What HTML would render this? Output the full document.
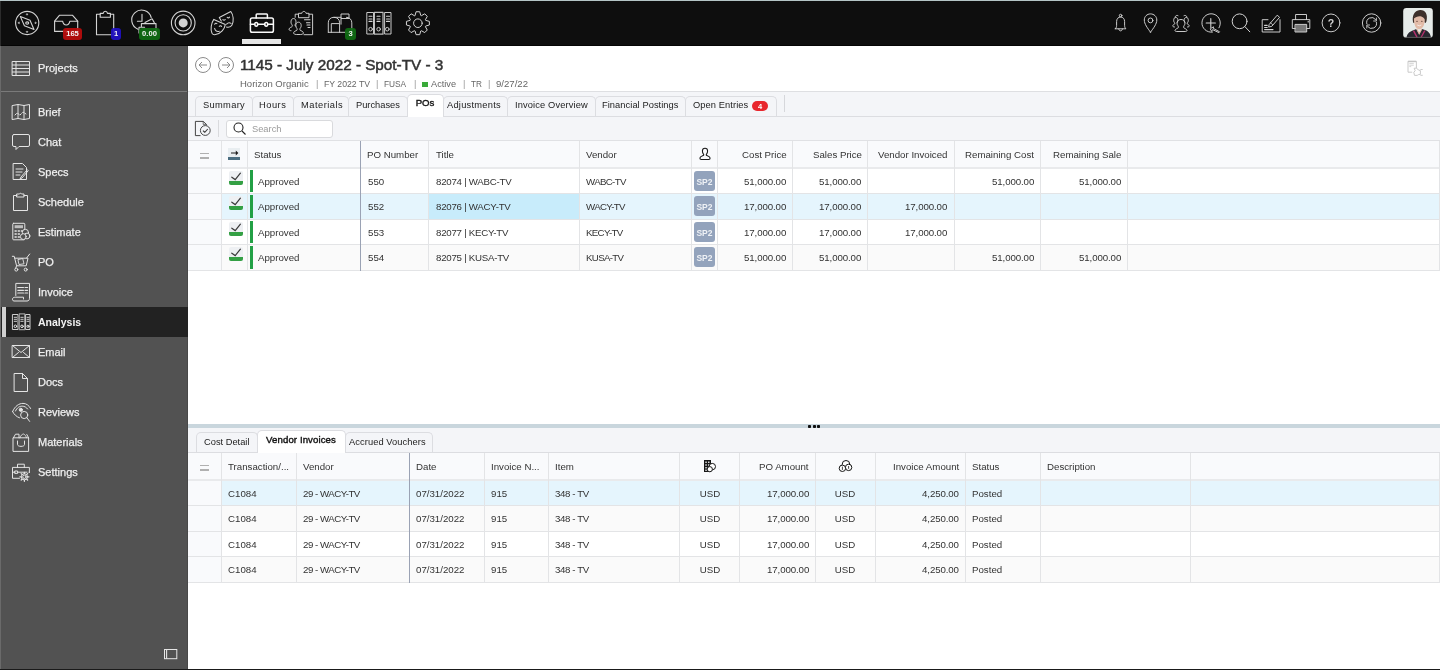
<!DOCTYPE html><html><head><meta charset='utf-8'><style>
*{box-sizing:border-box;margin:0;padding:0}
html,body{width:1440px;height:670px;overflow:hidden;background:#fff;font-family:"Liberation Sans", sans-serif;color:#333}
.a{position:absolute}
.t{position:absolute;white-space:nowrap;line-height:1;will-change:transform}
svg{position:absolute;overflow:visible}
</style></head><body><div id='root' style='position:absolute;left:0;top:0;width:1440px;height:670px;overflow:hidden;opacity:0.999'><div class='a' style='left:0;top:0;width:1440px;height:46px;background:#0e0e0e'></div><div class='a' style='left:0;top:0;width:1440px;height:1px;background:#b4c4c6'></div><div class='a' style='left:0;top:45px;width:1440px;height:1px;background:#050505'></div><div class='a' style='left:0;top:1px;width:1px;height:45px;background:#2c2c2c'></div><svg style='left:10px;top:6px' width='35' height='34' viewBox='10 6 35 34' fill='none' stroke='#d4d4d4' stroke-width='1.1' stroke-linecap='round' stroke-linejoin='round' ><circle cx='27.2' cy='23' r='11.6'/><path d='M20.4 16.6 L30 20.3 L34 29.5 L24.4 25.8 Z'/><ellipse cx='27.2' cy='23' rx='1.5' ry='1.1'/><path d='M26.5 14.8h1.4l-.7-1.1zM26.5 31.4h1.4l-.7 1.1zM19.3 22.3v1.4l-1.1-.7zM35.1 22.3v1.4l1.1-.7z' fill='#d4d4d4' stroke-width='0.6'/></svg><svg style='left:50px;top:10px' width='32' height='26' viewBox='50 10 32 26' fill='none' stroke='#d4d4d4' stroke-width='1.1' stroke-linecap='round' stroke-linejoin='round' ><path d='M54.6 31.4V21.2L59.4 15.3H72.6L77.7 21.2V31.4Z'/><path d='M54.6 21.2H62.6C63.6 26.3 68.9 26.3 69.9 21.2H77.7'/></svg><div class='a' style='left:63px;top:28px;width:19px;height:12px;background:#b90c0c;border-radius:3px;opacity:.93'></div><div class='t' style='left:63.0px;width:19px;text-align:center;top:30.37px;font-size:7.6px;font-weight:700;color:#f2f2f2;'>165</div><svg style='left:92px;top:8px' width='28' height='30' viewBox='92 8 28 30' fill='none' stroke='#d4d4d4' stroke-width='1.1' stroke-linecap='round' stroke-linejoin='round' ><path d='M100 14.2H96.5V34.7H113.7V14.2H110.4'/><path d='M100.2 17.2V13.4H103.2C103.6 10.6 107.1 10.6 107.5 13.4H110.4V17.2Z'/></svg><div class='a' style='left:111px;top:28px;width:10px;height:12px;background:#2010c4;border-radius:3px;opacity:.93'></div><div class='t' style='left:111.0px;width:10px;text-align:center;top:30.37px;font-size:7.6px;font-weight:700;color:#f2f2f2;'>1</div><svg style='left:128px;top:8px' width='32' height='30' viewBox='128 8 32 30' fill='none' stroke='#d4d4d4' stroke-width='1.1' stroke-linecap='round' stroke-linejoin='round' ><path d='M151.2 17.5A9.9 9.9 0 1 0 138 29.2'/><path d='M142 14.3V21.3H137.4'/><path d='M145 22.6L152.1 18.8L154.3 22.6'/><path d='M141.4 26.5V23.6H156V33H141.4'/><path d='M139 33V27.2H144.6'/></svg><div class='a' style='left:139px;top:28px;width:21px;height:12px;background:#0f6c12;border-radius:3px;opacity:.93'></div><div class='t' style='left:139.0px;width:21px;text-align:center;top:30.37px;font-size:7.6px;font-weight:700;color:#f2f2f2;'>0.00</div><svg style='left:168px;top:8px' width='30' height='30' viewBox='168 8 30 30' fill='none' stroke='#d4d4d4' stroke-width='1.1' stroke-linecap='round' stroke-linejoin='round' ><circle cx='183.2' cy='22.9' r='11.8'/><circle cx='183.2' cy='22.9' r='8.1'/><circle cx='183.2' cy='22.9' r='4.5' fill='#d4d4d4' stroke='none'/></svg><svg style='left:206px;top:8px' width='32' height='30' viewBox='206 8 32 30' fill='none' stroke='#d4d4d4' stroke-width='1.05' stroke-linecap='round' stroke-linejoin='round' ><path d='M213.8 19.4L225.3 24.6C224.6 29 221 33.6 215.5 34.6C213.6 35 212.6 34.3 212 33.2C210.1 29.5 211.3 23 213.8 19.4Z'/><path d='M221.3 21.1L219.3 17.5L230.8 11.5C233.5 15 234 21 232 25C231 27 229.5 27.6 226.5 27'/><path d='M214.7 24.2Q215.7 22.7 216.9 23.7M219.3 26.3Q220.5 25 221.6 26.4M214.6 28.4Q215.6 32.2 219.3 31.2'/><path d='M222.9 19.6Q224.1 20.8 225.2 19.5M227.2 17.4Q228.4 18.5 229.5 17.1M226.6 24.2Q228.6 21.7 231 23.4'/></svg><svg style='left:246px;top:10px' width='32' height='26' viewBox='246 10 32 26' fill='none' stroke='#fafafa' stroke-width='1.5' stroke-linecap='round' stroke-linejoin='round' ><rect x='250.4' y='18' width='23' height='14.3' rx='1.8'/><path d='M256.2 18V14.8Q256.2 14 257 14H266.6Q267.4 14 267.4 14.8V18'/><path d='M250.4 24.3H254.8M257.6 24.3H264.8M267.6 24.3H273.4'/><ellipse cx='256.2' cy='24.3' rx='1.5' ry='1.9'/><ellipse cx='266.2' cy='24.3' rx='1.5' ry='1.9'/></svg><div class='a' style='left:242px;top:39px;width:39px;height:5px;background:#e6e6e6'></div><svg style='left:285px;top:8px' width='31' height='30' viewBox='285 8 31 30' fill='none' stroke='#d4d4d4' stroke-width='0.95' stroke-linecap='round' stroke-linejoin='round' ><path d='M298.2 14.2H295.2V17.3M304 34.7H312.6V14.2H309'/><path d='M298.5 17.3V13.3H301.8C302.2 10.8 305.6 10.8 306 13.3H309V17.3Z'/><path d='M304.5 19.8H310M306.5 22.7H310M307 25H310M308 27.5H310' stroke-width='1.1'/><path d='M291 30.7C288 30.7 288.5 28 291.5 27C292.8 26.5 292.3 25 291.7 24.3C290.5 23 290.7 18.5 293.5 18.5C296.3 18.5 296.5 23 295.3 24.3C294.7 25 295 26 296 26.5'/><path d='M296 34.5C292.5 34.5 293 31.5 296.2 30.7C297.6 30.3 297.2 28.5 296.5 27.8C295.3 26.5 295.5 22.2 298.5 22.2C301.5 22.2 301.7 26.5 300.5 27.8C299.8 28.5 299.5 30.3 300.8 30.7C304 31.5 304.5 34.5 301 34.5Z'/></svg><svg style='left:324px;top:8px' width='32' height='30' viewBox='324 8 32 30' fill='none' stroke='#d4d4d4' stroke-width='0.95' stroke-linecap='round' stroke-linejoin='round' ><path d='M328.3 32.3V22.8C328.3 19.5 330.5 17.3 334 17.3H341M346.5 17.3C349.5 17.3 351.8 19.5 351.8 22.8V32.3H328.3'/><path d='M334 17.3C337.5 17.3 339.6 19.5 339.6 22.8V32.3'/><path d='M331.3 32.3V23.6H338.8'/><path d='M341 24.2V14H349V18.5H341.3'/></svg><div class='a' style='left:345px;top:28px;width:11px;height:12px;background:#0f6c12;border-radius:3px;opacity:.93'></div><div class='t' style='left:345.0px;width:11px;text-align:center;top:30.37px;font-size:7.6px;font-weight:700;color:#f2f2f2;'>3</div><svg style='left:364px;top:9px' width='30' height='28' viewBox='364 9 30 28' fill='none' stroke='#d4d4d4' stroke-width='0.95' stroke-linecap='round' stroke-linejoin='round' ><path d='M367.2 12.5H373.5V34H367.2Z'/><path d='M374.4 12.4H383V34.2H374.4Z' stroke='#bdbdbd' stroke-width='1.2'/><path d='M385 12.5H391V34H385Z'/><path d='M369 16.3H372M377 16.3H380M386.5 16.3H389.5M369 19H372M377 19H380M386.5 19H389.5M369 21.4H372M377 21.4H380M386.5 21.4H389.5' stroke-width='1.1'/><circle cx='370.6' cy='29.2' r='1.8'/><circle cx='378.6' cy='29.2' r='1.8'/><circle cx='387.3' cy='29.2' r='1.8'/></svg><svg style='left:403px;top:8px' width='30' height='30' viewBox='403 8 30 30' fill='none' stroke='#d4d4d4' stroke-width='1.0' stroke-linecap='round' stroke-linejoin='round' ><path d='M415.06 15.40 L416.09 11.74 L419.71 11.74 L420.74 15.40 L421.41 15.68 L424.72 13.82 L427.28 16.38 L425.42 19.69 L425.70 20.36 L429.36 21.39 L429.36 25.01 L425.70 26.04 L425.42 26.71 L427.28 30.02 L424.72 32.58 L421.41 30.72 L420.74 31.00 L419.71 34.66 L416.09 34.66 L415.06 31.00 L414.39 30.72 L411.08 32.58 L408.52 30.02 L410.38 26.71 L410.10 26.04 L406.44 25.01 L406.44 21.39 L410.10 20.36 L410.38 19.69 L408.52 16.38 L411.08 13.82 L414.39 15.68Z'/><circle cx='417.9' cy='23.2' r='4.3'/></svg><svg style='left:1110px;top:10px' width='22' height='26' viewBox='1110 10 22 26' fill='none' stroke='#d4d4d4' stroke-width='0.95' stroke-linecap='round' stroke-linejoin='round' ><circle cx='1120.6' cy='15.6' r='1.3'/><path d='M1115.3 28.8C1116.3 27.8 1116.6 26.8 1116.6 25.5V21.5C1116.6 18.8 1118.3 17 1120.6 17C1122.9 17 1124.6 18.8 1124.6 21.5V25.5C1124.6 26.8 1124.9 27.8 1125.9 28.8H1115.3Z'/><path d='M1118.8 29C1118.8 31.6 1122.4 31.6 1122.4 29'/></svg><svg style='left:1140px;top:10px' width='22' height='26' viewBox='1140 10 22 26' fill='none' stroke='#d4d4d4' stroke-width='0.95' stroke-linecap='round' stroke-linejoin='round' ><path d='M1150.5 32.2C1147.5 28 1144.3 24 1144.3 20C1144.3 16.5 1147 13.9 1150.5 13.9C1154 13.9 1156.8 16.5 1156.8 20C1156.8 24 1153.5 28 1150.5 32.2Z'/><circle cx='1150.5' cy='20.4' r='2.4'/></svg><svg style='left:1168px;top:10px' width='26' height='26' viewBox='1168 10 26 26' fill='none' stroke='#d4d4d4' stroke-width='0.95' stroke-linecap='round' stroke-linejoin='round' ><path d='M1174.5 27C1172.5 27 1171.8 25.5 1174 24.5C1175.2 24 1174.8 23 1174.3 22.4C1173.3 21.2 1173.3 17.5 1175.8 17.5C1178.3 17.5 1178.3 21.2 1177.3 22.4'/><path d='M1187.5 27C1189.5 27 1190.2 25.5 1188 24.5C1186.8 24 1187.2 23 1187.7 22.4C1188.7 21.2 1188.7 17.5 1186.2 17.5C1183.7 17.5 1183.7 21.2 1184.7 22.4'/><path d='M1176.5 31.5C1174 31.5 1174.5 29.5 1177.5 28.3C1178.8 27.8 1178.5 26.3 1177.8 25.5C1176.5 24 1176.5 19.5 1181 19.5C1185.5 19.5 1185.5 24 1184.2 25.5C1183.5 26.3 1183.2 27.8 1184.5 28.3C1187.5 29.5 1188 31.5 1185.5 31.5Z'/><path d='M1175 17C1175.5 15.5 1177 15 1178 15.6M1187 17C1186.5 15.5 1185 15 1184 15.6'/></svg><svg style='left:1198px;top:10px' width='26' height='26' viewBox='1198 10 26 26' fill='none' stroke='#d4d4d4' stroke-width='0.95' stroke-linecap='round' stroke-linejoin='round' ><path d='M1219 27.8A9.2 9.2 0 1 0 1212.5 32.1'/><path d='M1206.2 23H1215.4M1210.8 18.6V27.4' stroke-width='1.1'/><path d='M1210.6 28.6L1213.5 26.8L1213.3 28.4L1219.6 31.8L1218.8 32.6L1212.6 29.6L1211.8 31Z'/></svg><svg style='left:1228px;top:10px' width='26' height='26' viewBox='1228 10 26 26' fill='none' stroke='#d4d4d4' stroke-width='1.0' stroke-linecap='round' stroke-linejoin='round' ><circle cx='1239.6' cy='21.3' r='7.4'/><path d='M1244.9 26.6L1249.8 31.8'/></svg><svg style='left:1258px;top:10px' width='26' height='26' viewBox='1258 10 26 26' fill='none' stroke='#d4d4d4' stroke-width='0.95' stroke-linecap='round' stroke-linejoin='round' ><path d='M1268 19.7H1262.2V32H1280V19.7'/><path d='M1269.4 24.2L1277.2 15.2L1279.6 17.3L1271.8 26.3L1269 27Z'/><path d='M1270.2 22.6L1272.6 24.6' stroke-width='0.8'/><path d='M1264.6 25.4H1267.2M1264.6 27.5H1267.2M1264.6 29.6H1273' stroke-width='1.1'/></svg><svg style='left:1288px;top:10px' width='26' height='26' viewBox='1288 10 26 26' fill='none' stroke='#d4d4d4' stroke-width='0.95' stroke-linecap='round' stroke-linejoin='round' ><path d='M1295.6 19.6V14.5H1306.5V19.6'/><path d='M1295.6 28.5H1292.3V19.6H1309.8V28.5H1306.5'/><rect x='1295.4' y='24.4' width='11.3' height='7.6' fill='#777'/><path d='M1308.2 21.3V22' stroke-width='1.1'/></svg><svg style='left:1318px;top:10px' width='26' height='26' viewBox='1318 10 26 26' fill='none' stroke='#d4d4d4' stroke-width='0.95' stroke-linecap='round' stroke-linejoin='round' ><circle cx='1331' cy='22.9' r='8.9'/></svg><div class='t' style='left:1325.0px;width:12px;text-align:center;top:17.91px;font-size:10.5px;font-weight:700;color:#d4d4d4;'>?</div><svg style='left:1358px;top:10px' width='28' height='26' viewBox='1358 10 28 26' fill='none' stroke='#d4d4d4' stroke-width='0.95' stroke-linecap='round' stroke-linejoin='round' ><circle cx='1371.6' cy='23' r='9.2'/><path d='M1366.8 23.8A5 5 0 0 1 1375.6 19.5M1376.4 22.2A5 5 0 0 1 1367.6 26.5'/><path d='M1376.4 18V21H1373.6' stroke-width='0.9'/><path d='M1366.8 28V25H1369.6' stroke-width='0.9'/></svg><svg style='left:1403px;top:8px' width='30' height='30' viewBox='1403 8 30 30'><defs><clipPath id='av'><rect x='1403.2' y='8' width='29.6' height='29.8' rx='3.2'/></clipPath></defs><g clip-path='url(#av)'><rect x='1403' y='8' width='30' height='30' fill='#e6ebe9'/><path d='M1413 22C1412 16 1414 10.5 1420 10C1425.5 9.8 1428 14.5 1426.5 21C1426 23.5 1424.5 23.5 1424.3 21.5L1424.5 17L1414.5 18.5L1414.6 22.5C1414 23.5 1413.2 23.2 1413 22Z' fill='#3d302b'/><path d='M1414 19C1414 16 1416 15 1419 15C1422.5 15 1424.5 16.5 1424.6 19.5C1424.8 24.5 1423 29 1419.3 29.2C1415.6 29.3 1414 24.5 1414 19Z' fill='#e2bba8'/><path d='M1413.6 18.8C1414.5 14.5 1418 13 1421 13.4C1424 13.8 1425.6 15.8 1425.2 19.8C1424 17.8 1422.5 16.8 1420.5 16.3C1418 16 1415.5 17 1413.6 18.8Z' fill='#3d302b'/><ellipse cx='1417' cy='21.2' rx='0.9' ry='0.5' fill='#6a4a40'/><ellipse cx='1421.8' cy='21.2' rx='0.9' ry='0.5' fill='#6a4a40'/><path d='M1417.2 25Q1419.3 26.6 1421.4 25' stroke='#f6ebe6' stroke-width='0.9' fill='none'/><path d='M1406.5 38C1407 33.5 1409.5 31.5 1413.5 30.2L1416.3 29L1419.2 34L1422 29L1425 30C1429 31.5 1430.5 34 1431 38Z' fill='#26262e'/><path d='M1416.2 29.2L1419.2 35L1422.2 29.2L1421.5 28.6L1419.2 32.5L1416.9 28.6Z' fill='#ddb19c'/><path d='M1412.8 31L1416.5 37.8H1418L1414.3 30.5Z' fill='#b62f6c'/><path d='M1424.2 30.2L1420.2 37.8H1421.6L1425.5 30.7Z' fill='#b62f6c'/><rect x='1403' y='36.9' width='30' height='1.1' fill='#5a5a5a'/></g></svg><div class='a' style='left:0;top:46px;width:188px;height:624px;background:#525252'></div><div class='a' style='left:0;top:46px;width:1px;height:624px;background:#6a6a6a'></div><div class='a' style='left:187px;top:46px;width:1px;height:624px;background:#484848'></div><svg style='left:12px;top:61px' width='18' height='15' viewBox='0 0 18 15' fill='none' stroke='#e4e4e4' stroke-width='1' stroke-linejoin='round' stroke-linecap='round'><rect x='0.5' y='0.5' width='17' height='14'/><path d='M0.5 4h17M0.5 7.5h17M0.5 11h17M4 0.5v14'/></svg><div class='t' style='left:37.8px;top:62.69px;font-size:11px;font-weight:400;color:#efefef;-webkit-text-stroke:0.25px #efefef'>Projects</div><div class='a' style='left:1px;top:91px;width:186px;height:1px;background:#7a7a7a'></div><div class='t' style='left:37.8px;top:106.69px;font-size:11px;font-weight:400;color:#efefef;-webkit-text-stroke:0.25px #efefef'>Brief</div><svg style='left:12px;top:104px' width='18' height='16' viewBox='0 0 18 16' fill='none' stroke='#e4e4e4' stroke-width='1' stroke-linejoin='round' stroke-linecap='round'><path d='M0.5 1.5l5.5-1 6 1 5.5-1v14l-5.5 1-6-1-5.5 1z'/><path d='M6 0.5v14M12 1.5v14'/><path d='M3 11l2-2 3 2 3-3 3 2' stroke-dasharray='1 1.2'/></svg><div class='t' style='left:37.8px;top:136.69px;font-size:11px;font-weight:400;color:#efefef;-webkit-text-stroke:0.25px #efefef'>Chat</div><svg style='left:12px;top:134px' width='18' height='16' viewBox='0 0 18 16' fill='none' stroke='#e4e4e4' stroke-width='1' stroke-linejoin='round' stroke-linecap='round'><path d='M2 0.5h14a1.5 1.5 0 0 1 1.5 1.5v9a1.5 1.5 0 0 1-1.5 1.5H7l-3 3v-3H2A1.5 1.5 0 0 1 0.5 11V2A1.5 1.5 0 0 1 2 0.5z'/></svg><div class='t' style='left:37.8px;top:166.69px;font-size:11px;font-weight:400;color:#efefef;-webkit-text-stroke:0.25px #efefef'>Specs</div><svg style='left:13px;top:163px' width='16' height='18' viewBox='0 0 16 18' fill='none' stroke='#e4e4e4' stroke-width='1' stroke-linejoin='round' stroke-linecap='round'><path d='M0.5 0.5h9l4 4v12h-13z'/><path d='M3 6h7M3 9h6M3 12h4'/><path d='M15 8l-6 7-2 1 1-2 6-7z'/></svg><div class='t' style='left:37.8px;top:196.69px;font-size:11px;font-weight:400;color:#efefef;-webkit-text-stroke:0.25px #efefef'>Schedule</div><svg style='left:13px;top:193px' width='15' height='18' viewBox='0 0 15 18' fill='none' stroke='#e4e4e4' stroke-width='1' stroke-linejoin='round' stroke-linecap='round'><path d='M4 2.5H0.5v15h14v-15H11'/><path d='M4 1h2.5c0-1 2-1 2 0H11v3H4z'/></svg><div class='t' style='left:37.8px;top:226.69px;font-size:11px;font-weight:400;color:#efefef;-webkit-text-stroke:0.25px #efefef'>Estimate</div><svg style='left:8px;top:219px' width='26' height='25' viewBox='8 219 26 25' fill='none' stroke='#e4e4e4' stroke-width='1' stroke-linejoin='round' stroke-linecap='round'><rect x='12.8' y='223.3' width='12' height='16.5' rx='0.8'/><rect x='14.6' y='225.2' width='8.4' height='3' fill='#bdbdbd' stroke='none'/><path d='M15 231h1.3M18.2 231h1.3M21.3 231h1.3M15 234h1.3M18.2 234h1.3M15 237h1.3M18.2 237h1.3' stroke-width='1.3'/><circle cx='25.4' cy='232.4' r='3.1' fill='#525252'/><circle cx='27' cy='236' r='2.9' fill='#525252'/><circle cx='23.3' cy='236.6' r='2.9' fill='#525252'/></svg><div class='t' style='left:37.8px;top:256.69px;font-size:11px;font-weight:400;color:#efefef;-webkit-text-stroke:0.25px #efefef'>PO</div><svg style='left:8px;top:249px' width='26' height='26' viewBox='8 249 26 26' fill='none' stroke='#e4e4e4' stroke-width='1' stroke-linejoin='round' stroke-linecap='round'><path d='M12.3 256.3H14.2L16.6 265.8H26.2L28 258.2H15'/><path d='M26.6 258L29.7 254'/><circle cx='16.3' cy='269.6' r='1.5'/><circle cx='25.7' cy='269.6' r='1.5'/><path d='M16.6 265.8L15.7 268.1'/><path d='M18.3 259.5L22.7 258.5L24 263.8L19.4 264.5Z' stroke-width='0.9'/></svg><div class='t' style='left:37.8px;top:286.69px;font-size:11px;font-weight:400;color:#efefef;-webkit-text-stroke:0.25px #efefef'>Invoice</div><svg style='left:8px;top:279px' width='26' height='26' viewBox='8 279 26 26' fill='none' stroke='#e4e4e4' stroke-width='1' stroke-linejoin='round' stroke-linecap='round'><path d='M15.8 295.5V283.4H29.5V298.3C29.5 300 28.5 301 27 301H14C12.5 301 12.3 299.3 12.6 298.5C13 297.5 14.3 297.2 15.8 297.2H23.5V299'/><path d='M17.8 287.5H23.5M17.8 290.3H23.5M17.8 293H23.5M25 287.5H27.6M25 290.3H27.6M25 293H27.6' stroke-width='1.2'/></svg><div class='a' style='left:1px;top:307px;width:187px;height:30px;background:#222'></div><div class='a' style='left:2px;top:307px;width:4px;height:30px;background:#cfcfcf'></div><div class='t' style='left:37.6px;top:316.81px;font-size:10.5px;font-weight:700;color:#f4f4f4;'>Analysis</div><svg style='left:8px;top:309px' width='26' height='26' viewBox='8 309 26 26' fill='none' stroke='#e4e4e4' stroke-width='1' stroke-linejoin='round' stroke-linecap='round'><rect x='12.8' y='314.5' width='5.2' height='15' stroke='#cfcfcf'/><rect x='19.3' y='313.8' width='5.4' height='15.9' stroke='#9a9a9a' stroke-width='1.2'/><rect x='26' y='314.5' width='4' height='15' stroke='#cfcfcf'/><path d='M14.2 317.3h2.4M20.8 317.3h2.4M27 317.3h2M14.2 319.3h2.4M20.8 319.3h2.4M27 319.3h2M14.2 321.3h2.4M20.8 321.3h2.4M27 321.3h2' stroke-width='0.9'/><circle cx='15.4' cy='326.3' r='1.3'/><circle cx='22' cy='326.3' r='1.3'/><circle cx='28' cy='326.3' r='1.1'/></svg><div class='t' style='left:37.8px;top:346.69px;font-size:11px;font-weight:400;color:#efefef;-webkit-text-stroke:0.25px #efefef'>Email</div><svg style='left:12px;top:345px' width='18' height='13' viewBox='0 0 18 13' fill='none' stroke='#e4e4e4' stroke-width='1' stroke-linejoin='round' stroke-linecap='round'><rect x='0.5' y='0.5' width='17' height='12'/><path d='M0.5 0.5l8.5 7 8.5-7M0.5 12.5l6-5M17.5 12.5l-6-5'/></svg><div class='t' style='left:37.8px;top:376.69px;font-size:11px;font-weight:400;color:#efefef;-webkit-text-stroke:0.25px #efefef'>Docs</div><svg style='left:14px;top:373px' width='14' height='19' viewBox='0 0 14 19' fill='none' stroke='#e4e4e4' stroke-width='1' stroke-linejoin='round' stroke-linecap='round'><path d='M0.5 0.5h8l5 5v13h-13z'/><path d='M8.5 0.5v5h5'/></svg><div class='t' style='left:37.8px;top:406.69px;font-size:11px;font-weight:400;color:#efefef;-webkit-text-stroke:0.25px #efefef'>Reviews</div><svg style='left:8px;top:399px' width='26' height='26' viewBox='8 399 26 26' fill='none' stroke='#e4e4e4' stroke-width='1' stroke-linejoin='round' stroke-linecap='round'><path d='M12.6 411.5C15 406 19 403.4 23 403.4C26.5 403.4 29 405.5 30.6 408.5'/><path d='M12.6 411.5C14 414.5 16.5 416.8 19.5 417.8'/><path d='M15.5 411C17 407.5 19.5 406.2 22.2 406.2C24.5 406.2 26.3 407.2 27.6 409'/><circle cx='20.8' cy='409.8' r='1.6' fill='#e4e4e4'/><circle cx='24.2' cy='415' r='3.6'/><path d='M26.8 417.6L29.6 421.4'/></svg><div class='t' style='left:37.8px;top:436.69px;font-size:11px;font-weight:400;color:#efefef;-webkit-text-stroke:0.25px #efefef'>Materials</div><svg style='left:8px;top:429px' width='26' height='26' viewBox='8 429 26 26' fill='none' stroke='#e4e4e4' stroke-width='1' stroke-linejoin='round' stroke-linecap='round'><path d='M13.4 437.8H28.6V451.4H13.4Z'/><path d='M13.4 437.8L15.5 434.2H19V437.8'/><path d='M28.6 437.8L26.8 434.5'/><path d='M20 437.8C20.5 435.5 22 434.3 23.5 434C25 434.5 26 436 26.5 437.8' stroke-width='0.9'/><path d='M17.5 441V444.5C17.5 447 24.5 447 24.5 444.5V441'/></svg><div class='t' style='left:37.8px;top:466.69px;font-size:11px;font-weight:400;color:#efefef;-webkit-text-stroke:0.25px #efefef'>Settings</div><svg style='left:8px;top:459px' width='26' height='26' viewBox='8 459 26 26' fill='none' stroke='#e4e4e4' stroke-width='1' stroke-linejoin='round' stroke-linecap='round'><path d='M17.5 467.4V464.2H24.3V467.4'/><path d='M19.5 478.3H12.5V467.4H29.4V472.5'/><path d='M12.5 472.2H15M17.8 472.2H27M29 472.2H29.4'/><rect x='15.1' y='471' width='2.5' height='2.4'/><circle cx='24.4' cy='476.8' r='1.7'/><path d='M24.4 472.3V473.4M24.4 480.2V481.3M19.9 476.8H21M27.8 476.8H28.9M21.2 473.6L22 474.4M26.8 479.2L27.6 480M21.2 480L22 479.2M26.8 474.4L27.6 473.6' stroke-width='1.3'/><circle cx='24.4' cy='476.8' r='3.1'/></svg><svg style='left:160px;top:645px' width='22' height='18' viewBox='160 645 22 18' fill='none' stroke='#e6e6e6' stroke-width='1'><rect x='164.5' y='649.5' width='12.3' height='9.2'/><path d='M166.6 649.5V658.7' stroke-width='1.1'/></svg><svg style='left:195px;top:57px' width='16' height='16' viewBox='0 0 16 16' fill='none' stroke='#8a8a8a' stroke-width='1'><circle cx='8' cy='8' r='7.5'/><path d='M12 8H4M7 5L4 8l3 3'/></svg><svg style='left:218px;top:57px' width='16' height='16' viewBox='0 0 16 16' fill='none' stroke='#8a8a8a' stroke-width='1'><circle cx='8' cy='8' r='7.5'/><path d='M4 8h8M9 5l3 3-3 3'/></svg><div class='t' style='left:239.8px;top:57.05px;font-size:15.3px;font-weight:400;color:#333;letter-spacing:-0.02px;-webkit-text-stroke:0.5px #333'>1145 - July 2022 - Spot-TV - 3</div><div class='t' style='left:240px;top:79.46px;font-size:9.5px;font-weight:400;color:#666;'>Horizon Organic</div><div class='t' style='left:315.5px;top:79.63px;font-size:9.3px;font-weight:400;color:#999;'>|</div><div class='t' style='left:323.5px;top:80.14px;font-size:8.7px;font-weight:400;color:#666;'>FY 2022 TV</div><div class='t' style='left:376px;top:79.63px;font-size:9.3px;font-weight:400;color:#999;'>|</div><div class='t' style='left:384px;top:80.47px;font-size:8.3px;font-weight:400;color:#666;'>FUSA</div><div class='t' style='left:413.5px;top:79.63px;font-size:9.3px;font-weight:400;color:#999;'>|</div><div class='t' style='left:430.5px;top:79.71px;font-size:9.2px;font-weight:400;color:#666;'>Active</div><div class='t' style='left:463px;top:79.63px;font-size:9.3px;font-weight:400;color:#999;'>|</div><div class='t' style='left:470.5px;top:80.56px;font-size:8.2px;font-weight:400;color:#666;'>TR</div><div class='t' style='left:488px;top:79.63px;font-size:9.3px;font-weight:400;color:#999;'>|</div><div class='t' style='left:495.5px;top:79.37px;font-size:9.6px;font-weight:400;color:#666;'>9/27/22</div><div class='a' style='left:421.5px;top:81.5px;width:6px;height:5.5px;background:#3aaa3a;'></div><svg style='left:1404px;top:58px' width='22' height='20' viewBox='1404 58 22 20' fill='none' stroke='#c4c4c4' stroke-width='0.9' stroke-linejoin='round'><path d='M1412.2 72.2H1408V61.3H1416.4V68'/><path d='M1408.2 61.5H1416.2' stroke-width='1.3'/><path d='M1409.3 63.4H1413.8M1409.3 65.2H1413.8M1409.3 66.6H1411.2' stroke-width='0.7'/><path d='M1414.1 68.3L1416.5 68.1L1418.4 70L1420.4 70.6V74.4L1418.7 74.5L1417.2 75.4H1414.5L1413.8 72.3L1415.2 70.7Z'/><path d='M1420.4 69.5H1422.7M1420.4 75.3H1422.7'/></svg><div class='a' style='left:188px;top:91px;width:1252px;height:1px;background:#dedfe2;'></div><div class='a' style='left:188px;top:92px;width:1252px;height:49px;background:#f4f5f8;'></div><div class='a' style='left:188px;top:116px;width:1252px;height:1px;background:#dcdde1;'></div><div class='a' style='left:195px;top:96px;width:58px;height:21px;background:#f4f5f8;border:1px solid #dcdde1;border-bottom:none;border-radius:5px 5px 0 0'></div><div class='t' style='left:203px;top:101.13px;font-size:9.3px;font-weight:400;color:#222;letter-spacing:0.33px'>Summary</div><div class='a' style='left:252px;top:96px;width:42px;height:21px;background:#f4f5f8;border:1px solid #dcdde1;border-bottom:none;border-radius:5px 5px 0 0'></div><div class='t' style='left:259px;top:101.13px;font-size:9.3px;font-weight:400;color:#222;letter-spacing:0.5px'>Hours</div><div class='a' style='left:293px;top:96px;width:56px;height:21px;background:#f4f5f8;border:1px solid #dcdde1;border-bottom:none;border-radius:5px 5px 0 0'></div><div class='t' style='left:300.5px;top:101.13px;font-size:9.3px;font-weight:400;color:#222;letter-spacing:0.5px'>Materials</div><div class='a' style='left:348px;top:96px;width:60px;height:21px;background:#f4f5f8;border:1px solid #dcdde1;border-bottom:none;border-radius:5px 5px 0 0'></div><div class='t' style='left:355.5px;top:101.13px;font-size:9.3px;font-weight:400;color:#222;letter-spacing:0px'>Purchases</div><div class='a' style='left:407px;top:94px;width:37px;height:23px;background:#fff;border:1px solid #dcdde1;border-bottom:none;border-radius:5px 5px 0 0'></div><div class='t' style='left:407.0px;width:36px;text-align:center;top:98.27px;font-size:9.6px;font-weight:400;color:#111;-webkit-text-stroke:0.38px #111'>POs</div><div class='a' style='left:443px;top:96px;width:65px;height:21px;background:#f4f5f8;border:1px solid #dcdde1;border-bottom:none;border-radius:5px 5px 0 0'></div><div class='t' style='left:447px;top:101.13px;font-size:9.3px;font-weight:400;color:#222;letter-spacing:0.25px'>Adjustments</div><div class='a' style='left:507px;top:96px;width:89px;height:21px;background:#f4f5f8;border:1px solid #dcdde1;border-bottom:none;border-radius:5px 5px 0 0'></div><div class='t' style='left:515px;top:101.13px;font-size:9.3px;font-weight:400;color:#222;letter-spacing:0.13px'>Invoice Overview</div><div class='a' style='left:595px;top:96px;width:91px;height:21px;background:#f4f5f8;border:1px solid #dcdde1;border-bottom:none;border-radius:5px 5px 0 0'></div><div class='t' style='left:602px;top:101.13px;font-size:9.3px;font-weight:400;color:#222;letter-spacing:0.06px'>Financial Postings</div><div class='a' style='left:685px;top:96px;width:92px;height:21px;background:#f4f5f8;border:1px solid #dcdde1;border-bottom:none;border-radius:5px 5px 0 0'></div><div class='t' style='left:693px;top:101.13px;font-size:9.3px;font-weight:400;color:#222;letter-spacing:0.09px'>Open Entries</div><div class='a' style='left:188px;top:116px;width:219px;height:1px;background:#dcdde1;'></div><div class='a' style='left:444px;top:116px;width:996px;height:1px;background:#dcdde1;'></div><div class='a' style='left:752px;top:101px;width:16px;height:10px;background:#e8262d;border-radius:5px'></div><div class='t' style='left:752.0px;width:16px;text-align:center;top:102.65px;font-size:7.5px;font-weight:700;color:#fff;'>4</div><div class='a' style='left:784px;top:95px;width:1px;height:17px;background:#d6d7db;'></div><svg style='left:192px;top:118px' width='22' height='22' viewBox='192 118 22 22' fill='none' stroke='#3c3c3c' stroke-width='0.95' stroke-linejoin='round'><path d='M200.5 135.6H195.4V121.4H203.2L206.4 124.4V125.3'/><path d='M203.2 121.4V124.4H206.4' stroke-width='0.7'/><circle cx='205.3' cy='130.5' r='4.9'/><path d='M203 130.6L204.7 132.3L207.8 129' stroke-width='1.05'/></svg><div class='a' style='left:218px;top:120px;width:1px;height:17px;background:#d9dadd;'></div><div class='a' style='left:226px;top:120px;width:107px;height:18px;background:#fff;border:1px solid #d9dadd;border-radius:3px'></div><svg style='left:233px;top:122px' width='13' height='13' viewBox='0 0 13 13' fill='none' stroke='#222' stroke-width='1.1'><circle cx='5.5' cy='5.5' r='4.5'/><path d='M9 9l3.5 3.5'/></svg><div class='t' style='left:252px;top:124.63px;font-size:9.3px;font-weight:400;color:#9a9a9a;'>Search</div><div class='a' style='left:188px;top:140px;width:1252px;height:1px;background:#e0e1e4;'></div><div class='a' style='left:188px;top:141px;width:1252px;height:27px;background:#f9fafc;'></div><div class='a' style='left:222px;top:168px;width:1217px;height:25px;background:#fff;'></div><div class='a' style='left:188px;top:168px;width:33px;height:25px;background:#f9fafc;'></div><div class='a' style='left:222px;top:193px;width:1217px;height:26px;background:#e5f5fd;'></div><div class='a' style='left:188px;top:193px;width:33px;height:26px;background:#f9fafc;'></div><div class='a' style='left:222px;top:219px;width:1217px;height:25px;background:#fff;'></div><div class='a' style='left:188px;top:219px;width:33px;height:25px;background:#f9fafc;'></div><div class='a' style='left:222px;top:244px;width:1217px;height:26px;background:#fafafa;'></div><div class='a' style='left:188px;top:244px;width:33px;height:26px;background:#f9fafc;'></div><div class='a' style='left:429px;top:193px;width:150px;height:26px;background:#c8ecfb;'></div><div class='a' style='left:188px;top:167px;width:1252px;height:2px;background:#e9eaec;'></div><div class='a' style='left:188px;top:193px;width:1252px;height:1px;background:#e3e4e6;'></div><div class='a' style='left:188px;top:219px;width:1252px;height:1px;background:#e3e4e6;'></div><div class='a' style='left:188px;top:244px;width:1252px;height:1px;background:#e3e4e6;'></div><div class='a' style='left:188px;top:270px;width:1252px;height:1px;background:#e3e4e6;'></div><div class='a' style='left:221px;top:141px;width:1px;height:130px;background:#e3e4e6;'></div><div class='a' style='left:247px;top:141px;width:1px;height:130px;background:#e3e4e6;'></div><div class='a' style='left:360px;top:141px;width:1px;height:130px;background:#9aa2b4;'></div><div class='a' style='left:428px;top:141px;width:1px;height:130px;background:#e3e4e6;'></div><div class='a' style='left:579px;top:141px;width:1px;height:130px;background:#e3e4e6;'></div><div class='a' style='left:691px;top:141px;width:1px;height:130px;background:#e3e4e6;'></div><div class='a' style='left:717px;top:141px;width:1px;height:130px;background:#e3e4e6;'></div><div class='a' style='left:792px;top:141px;width:1px;height:130px;background:#e3e4e6;'></div><div class='a' style='left:867px;top:141px;width:1px;height:130px;background:#e3e4e6;'></div><div class='a' style='left:954px;top:141px;width:1px;height:130px;background:#e3e4e6;'></div><div class='a' style='left:1040px;top:141px;width:1px;height:130px;background:#e3e4e6;'></div><div class='a' style='left:1127px;top:141px;width:1px;height:130px;background:#e3e4e6;'></div><div class='a' style='left:1439px;top:141px;width:1px;height:130px;background:#e3e4e6;'></div><div class='a' style='left:199.7px;top:152.8px;width:9.4px;height:1.7px;background:#b0b0b0;'></div><div class='a' style='left:199.7px;top:157.3px;width:9.4px;height:1.7px;background:#b0b0b0;'></div><div class='a' style='left:228.3px;top:148.3px;width:12px;height:11.7px;background:#e9eef1;'></div><div class='a' style='left:228.3px;top:157px;width:12px;height:3px;background:#4a6d80;'></div><svg style='left:228px;top:148px' width='13' height='9' viewBox='228 148 13 9' fill='#1e1e1e' stroke='none'><path d='M231 152.4h4.8v-2l2.6 2.6-2.6 2.6v-2H231z'/></svg><div class='t' style='left:254px;top:149.79px;font-size:9.7px;font-weight:400;color:#333;'>Status</div><div class='t' style='left:367px;top:149.79px;font-size:9.7px;font-weight:400;color:#333;'>PO Number</div><div class='t' style='left:436px;top:149.79px;font-size:9.7px;font-weight:400;color:#333;'>Title</div><div class='t' style='left:586px;top:149.79px;font-size:9.7px;font-weight:400;color:#333;'>Vendor</div><svg style='left:696px;top:144px' width='18' height='18' viewBox='696 144 18 18' fill='none' stroke='#1a1a1a' stroke-width='1.1' stroke-linejoin='round'><path d='M705 148.3c1.8 0 2.6 1.1 2.6 2.8c0 1.6-.6 2.6-1.2 3.2c-.3.4-.1 1 .4 1.2c2 .8 3.3 1.3 3.3 2.6c0 1-.5 1.4-1.3 1.4h-7.6c-.8 0-1.3-.4-1.3-1.4c0-1.3 1.3-1.8 3.3-2.6c.5-.2.7-.8.4-1.2c-.6-.6-1.2-1.6-1.2-3.2c0-1.7.8-2.8 2.6-2.8z'/></svg><div class='t' style='right:653px;top:149.79px;font-size:9.7px;font-weight:400;color:#333;'>Cost Price</div><div class='t' style='right:578px;top:149.79px;font-size:9.7px;font-weight:400;color:#333;'>Sales Price</div><div class='t' style='right:493px;top:149.79px;font-size:9.7px;font-weight:400;color:#333;'>Vendor Invoiced</div><div class='t' style='right:406px;top:149.79px;font-size:9.7px;font-weight:400;color:#333;'>Remaining Cost</div><div class='t' style='right:319px;top:149.79px;font-size:9.7px;font-weight:400;color:#333;'>Remaining Sale</div><div class='a' style='left:229px;top:171px;width:14px;height:14px;background:#eef0f3;border-radius:2px'></div><div class='a' style='left:229px;top:181px;width:14px;height:4px;background:#34a044;border-radius:0 0 2px 2px'></div><svg style='left:229px;top:168px' width='14' height='14' viewBox='229 168 14 14' fill='none' stroke='#3a3a3a' stroke-width='1.2' stroke-linecap='round'><path d='M231.8 177.2L235.2 179.6L240.4 173.2'/></svg><div class='a' style='left:249.5px;top:170px;width:3px;height:22px;background:#22a045;'></div><div class='t' style='left:258.3px;top:177.29px;font-size:9.7px;font-weight:400;color:#333;'>Approved</div><div class='t' style='left:368px;top:177.29px;font-size:9.7px;font-weight:400;color:#333;'>550</div><div class='t' style='left:436px;top:177.29px;font-size:9.7px;font-weight:400;color:#333;letter-spacing:-0.25px'>82074 | WABC-TV</div><div class='t' style='left:586px;top:177.29px;font-size:9.7px;font-weight:400;color:#333;letter-spacing:-0.65px'>WABC-TV</div><div class='a' style='left:694px;top:171px;width:21px;height:20px;background:#93a3bc;border-radius:3px'></div><div class='t' style='left:694.0px;width:21px;text-align:center;top:178.30px;font-size:8.5px;font-weight:700;color:#eef1f5;'>SP2</div><div class='t' style='right:654px;top:177.29px;font-size:9.7px;font-weight:400;color:#333;letter-spacing:-0.1px;margin-right:-0.1px'>51,000.00</div><div class='t' style='right:579px;top:177.29px;font-size:9.7px;font-weight:400;color:#333;letter-spacing:-0.1px;margin-right:-0.1px'>51,000.00</div><div class='t' style='right:493px;top:177.29px;font-size:9.7px;font-weight:400;color:#333;letter-spacing:-0.1px;margin-right:-0.1px'></div><div class='t' style='right:406px;top:177.29px;font-size:9.7px;font-weight:400;color:#333;letter-spacing:-0.1px;margin-right:-0.1px'>51,000.00</div><div class='t' style='right:319px;top:177.29px;font-size:9.7px;font-weight:400;color:#333;letter-spacing:-0.1px;margin-right:-0.1px'>51,000.00</div><div class='a' style='left:229px;top:196px;width:14px;height:14px;background:#eef0f3;border-radius:2px'></div><div class='a' style='left:229px;top:206px;width:14px;height:4px;background:#34a044;border-radius:0 0 2px 2px'></div><svg style='left:229px;top:193px' width='14' height='14' viewBox='229 193 14 14' fill='none' stroke='#3a3a3a' stroke-width='1.2' stroke-linecap='round'><path d='M231.8 202.2L235.2 204.6L240.4 198.2'/></svg><div class='a' style='left:249.5px;top:195px;width:3px;height:23px;background:#22a045;'></div><div class='t' style='left:258.3px;top:202.29px;font-size:9.7px;font-weight:400;color:#333;'>Approved</div><div class='t' style='left:368px;top:202.29px;font-size:9.7px;font-weight:400;color:#333;'>552</div><div class='t' style='left:436px;top:202.29px;font-size:9.7px;font-weight:400;color:#333;letter-spacing:-0.25px'>82076 | WACY-TV</div><div class='t' style='left:586px;top:202.29px;font-size:9.7px;font-weight:400;color:#333;letter-spacing:-0.65px'>WACY-TV</div><div class='a' style='left:694px;top:196px;width:21px;height:20px;background:#93a3bc;border-radius:3px'></div><div class='t' style='left:694.0px;width:21px;text-align:center;top:203.30px;font-size:8.5px;font-weight:700;color:#eef1f5;'>SP2</div><div class='t' style='right:654px;top:202.29px;font-size:9.7px;font-weight:400;color:#333;letter-spacing:-0.1px;margin-right:-0.1px'>17,000.00</div><div class='t' style='right:579px;top:202.29px;font-size:9.7px;font-weight:400;color:#333;letter-spacing:-0.1px;margin-right:-0.1px'>17,000.00</div><div class='t' style='right:493px;top:202.29px;font-size:9.7px;font-weight:400;color:#333;letter-spacing:-0.1px;margin-right:-0.1px'>17,000.00</div><div class='t' style='right:406px;top:202.29px;font-size:9.7px;font-weight:400;color:#333;letter-spacing:-0.1px;margin-right:-0.1px'></div><div class='t' style='right:319px;top:202.29px;font-size:9.7px;font-weight:400;color:#333;letter-spacing:-0.1px;margin-right:-0.1px'></div><div class='a' style='left:229px;top:222px;width:14px;height:14px;background:#eef0f3;border-radius:2px'></div><div class='a' style='left:229px;top:232px;width:14px;height:4px;background:#34a044;border-radius:0 0 2px 2px'></div><svg style='left:229px;top:219px' width='14' height='14' viewBox='229 219 14 14' fill='none' stroke='#3a3a3a' stroke-width='1.2' stroke-linecap='round'><path d='M231.8 228.2L235.2 230.6L240.4 224.2'/></svg><div class='a' style='left:249.5px;top:221px;width:3px;height:22px;background:#22a045;'></div><div class='t' style='left:258.3px;top:228.29px;font-size:9.7px;font-weight:400;color:#333;'>Approved</div><div class='t' style='left:368px;top:228.29px;font-size:9.7px;font-weight:400;color:#333;'>553</div><div class='t' style='left:436px;top:228.29px;font-size:9.7px;font-weight:400;color:#333;letter-spacing:-0.25px'>82077 | KECY-TV</div><div class='t' style='left:586px;top:228.29px;font-size:9.7px;font-weight:400;color:#333;letter-spacing:-0.65px'>KECY-TV</div><div class='a' style='left:694px;top:222px;width:21px;height:20px;background:#93a3bc;border-radius:3px'></div><div class='t' style='left:694.0px;width:21px;text-align:center;top:229.30px;font-size:8.5px;font-weight:700;color:#eef1f5;'>SP2</div><div class='t' style='right:654px;top:228.29px;font-size:9.7px;font-weight:400;color:#333;letter-spacing:-0.1px;margin-right:-0.1px'>17,000.00</div><div class='t' style='right:579px;top:228.29px;font-size:9.7px;font-weight:400;color:#333;letter-spacing:-0.1px;margin-right:-0.1px'>17,000.00</div><div class='t' style='right:493px;top:228.29px;font-size:9.7px;font-weight:400;color:#333;letter-spacing:-0.1px;margin-right:-0.1px'>17,000.00</div><div class='t' style='right:406px;top:228.29px;font-size:9.7px;font-weight:400;color:#333;letter-spacing:-0.1px;margin-right:-0.1px'></div><div class='t' style='right:319px;top:228.29px;font-size:9.7px;font-weight:400;color:#333;letter-spacing:-0.1px;margin-right:-0.1px'></div><div class='a' style='left:229px;top:247px;width:14px;height:14px;background:#eef0f3;border-radius:2px'></div><div class='a' style='left:229px;top:257px;width:14px;height:4px;background:#34a044;border-radius:0 0 2px 2px'></div><svg style='left:229px;top:244px' width='14' height='14' viewBox='229 244 14 14' fill='none' stroke='#3a3a3a' stroke-width='1.2' stroke-linecap='round'><path d='M231.8 253.2L235.2 255.6L240.4 249.2'/></svg><div class='a' style='left:249.5px;top:246px;width:3px;height:23px;background:#22a045;'></div><div class='t' style='left:258.3px;top:253.29px;font-size:9.7px;font-weight:400;color:#333;'>Approved</div><div class='t' style='left:368px;top:253.29px;font-size:9.7px;font-weight:400;color:#333;'>554</div><div class='t' style='left:436px;top:253.29px;font-size:9.7px;font-weight:400;color:#333;letter-spacing:-0.25px'>82075 | KUSA-TV</div><div class='t' style='left:586px;top:253.29px;font-size:9.7px;font-weight:400;color:#333;letter-spacing:-0.65px'>KUSA-TV</div><div class='a' style='left:694px;top:247px;width:21px;height:20px;background:#93a3bc;border-radius:3px'></div><div class='t' style='left:694.0px;width:21px;text-align:center;top:254.30px;font-size:8.5px;font-weight:700;color:#eef1f5;'>SP2</div><div class='t' style='right:654px;top:253.29px;font-size:9.7px;font-weight:400;color:#333;letter-spacing:-0.1px;margin-right:-0.1px'>51,000.00</div><div class='t' style='right:579px;top:253.29px;font-size:9.7px;font-weight:400;color:#333;letter-spacing:-0.1px;margin-right:-0.1px'>51,000.00</div><div class='t' style='right:493px;top:253.29px;font-size:9.7px;font-weight:400;color:#333;letter-spacing:-0.1px;margin-right:-0.1px'></div><div class='t' style='right:406px;top:253.29px;font-size:9.7px;font-weight:400;color:#333;letter-spacing:-0.1px;margin-right:-0.1px'>51,000.00</div><div class='t' style='right:319px;top:253.29px;font-size:9.7px;font-weight:400;color:#333;letter-spacing:-0.1px;margin-right:-0.1px'>51,000.00</div><div class='a' style='left:188px;top:424px;width:1252px;height:4px;background:#c9d6dd;'></div><div class='a' style='left:808.0px;top:425px;width:3px;height:2.8px;background:#111;border-radius:0.8px'></div><div class='a' style='left:812.6px;top:425px;width:3px;height:2.8px;background:#111;border-radius:0.8px'></div><div class='a' style='left:817.2px;top:425px;width:3px;height:2.8px;background:#111;border-radius:0.8px'></div><div class='a' style='left:188px;top:428px;width:1252px;height:24px;background:#f4f5f8;'></div><div class='a' style='left:188px;top:452px;width:1252px;height:1px;background:#dcdde1;'></div><div class='a' style='left:196px;top:432px;width:62px;height:21px;background:#f4f5f8;border:1px solid #dcdde1;border-bottom:none;border-radius:5px 5px 0 0'></div><div class='t' style='left:204px;top:437.63px;font-size:9.3px;font-weight:400;color:#222;'>Cost Detail</div><div class='a' style='left:257px;top:430px;width:89px;height:23px;background:#fff;border:1px solid #dcdde1;border-bottom:none;border-radius:5px 5px 0 0'></div><div class='t' style='left:257.0px;width:88px;text-align:center;top:435.17px;font-size:9.6px;font-weight:400;color:#111;letter-spacing:0.1px;-webkit-text-stroke:0.38px #111'>Vendor Invoices</div><div class='a' style='left:345px;top:432px;width:88px;height:21px;background:#f4f5f8;border:1px solid #dcdde1;border-bottom:none;border-radius:5px 5px 0 0'></div><div class='t' style='left:349px;top:437.63px;font-size:9.3px;font-weight:400;color:#222;letter-spacing:0.08px'>Accrued Vouchers</div><div class='a' style='left:188px;top:452px;width:69px;height:1px;background:#dcdde1;'></div><div class='a' style='left:346px;top:452px;width:1094px;height:1px;background:#dcdde1;'></div><div class='a' style='left:188px;top:453px;width:1252px;height:27px;background:#f9fafc;'></div><div class='a' style='left:222px;top:480px;width:1217px;height:25px;background:#e5f5fd;'></div><div class='a' style='left:188px;top:480px;width:33px;height:25px;background:#f9fafc;'></div><div class='a' style='left:222px;top:505px;width:1217px;height:26px;background:#fafafa;'></div><div class='a' style='left:188px;top:505px;width:33px;height:26px;background:#f9fafc;'></div><div class='a' style='left:222px;top:531px;width:1217px;height:25px;background:#fff;'></div><div class='a' style='left:188px;top:531px;width:33px;height:25px;background:#f9fafc;'></div><div class='a' style='left:222px;top:556px;width:1217px;height:26px;background:#fafafa;'></div><div class='a' style='left:188px;top:556px;width:33px;height:26px;background:#f9fafc;'></div><div class='a' style='left:188px;top:479px;width:1252px;height:2px;background:#e9eaec;'></div><div class='a' style='left:188px;top:505px;width:1252px;height:1px;background:#e3e4e6;'></div><div class='a' style='left:188px;top:531px;width:1252px;height:1px;background:#e3e4e6;'></div><div class='a' style='left:188px;top:556px;width:1252px;height:1px;background:#e3e4e6;'></div><div class='a' style='left:188px;top:582px;width:1252px;height:1px;background:#e3e4e6;'></div><div class='a' style='left:221px;top:453px;width:1px;height:130px;background:#e3e4e6;'></div><div class='a' style='left:296px;top:453px;width:1px;height:130px;background:#e3e4e6;'></div><div class='a' style='left:409px;top:453px;width:1px;height:130px;background:#9aa2b4;'></div><div class='a' style='left:484px;top:453px;width:1px;height:130px;background:#e3e4e6;'></div><div class='a' style='left:548px;top:453px;width:1px;height:130px;background:#e3e4e6;'></div><div class='a' style='left:679px;top:453px;width:1px;height:130px;background:#e3e4e6;'></div><div class='a' style='left:739px;top:453px;width:1px;height:130px;background:#e3e4e6;'></div><div class='a' style='left:815px;top:453px;width:1px;height:130px;background:#e3e4e6;'></div><div class='a' style='left:875px;top:453px;width:1px;height:130px;background:#e3e4e6;'></div><div class='a' style='left:965px;top:453px;width:1px;height:130px;background:#e3e4e6;'></div><div class='a' style='left:1040px;top:453px;width:1px;height:130px;background:#e3e4e6;'></div><div class='a' style='left:1190px;top:453px;width:1px;height:130px;background:#e3e4e6;'></div><div class='a' style='left:1439px;top:453px;width:1px;height:130px;background:#e3e4e6;'></div><div class='a' style='left:199.7px;top:464.6px;width:9.4px;height:1.7px;background:#b0b0b0;'></div><div class='a' style='left:199.7px;top:469.1px;width:9.4px;height:1.7px;background:#b0b0b0;'></div><div class='t' style='left:228px;top:461.79px;font-size:9.7px;font-weight:400;color:#333;'>Transaction/...</div><div class='t' style='left:303px;top:461.79px;font-size:9.7px;font-weight:400;color:#333;'>Vendor</div><div class='t' style='left:416px;top:461.79px;font-size:9.7px;font-weight:400;color:#333;'>Date</div><div class='t' style='left:491px;top:461.79px;font-size:9.7px;font-weight:400;color:#333;'>Invoice N...</div><div class='t' style='left:555px;top:461.79px;font-size:9.7px;font-weight:400;color:#333;'>Item</div><svg style='left:700px;top:456px' width='20' height='20' viewBox='700 456 20 20' stroke-linejoin='round'><rect x='704' y='460' width='7' height='12' fill='#151515'/><path d='M705.3 461.6h1.5v1.4h-1.5zM708 461.6h1.5v1.4H708zM705.3 464.3h1.5v1.4h-1.5zM708 464.3h1.5v1.4H708zM705.3 467h1.5v1.4h-1.5zM705.3 469.6h1.5v1.4h-1.5z' fill='#ddd'/><circle cx='712.3' cy='466.6' r='3.2' fill='#fff' stroke='#151515' stroke-width='1'/><circle cx='709.8' cy='469.2' r='2.6' fill='#fff' stroke='#151515' stroke-width='1'/></svg><div class='t' style='right:631px;top:461.79px;font-size:9.7px;font-weight:400;color:#333;'>PO Amount</div><svg style='left:836px;top:457px' width='20' height='18' viewBox='836 457 20 18' stroke='#151515' stroke-width='1' fill='#fff'><circle cx='846' cy='464.3' r='3.8'/><circle cx='848.6' cy='467.4' r='3.2'/><circle cx='842.4' cy='468.3' r='3.2'/><path d='M842.4 466.6v3.3M848.6 466v2.8' stroke-width='0.8'/></svg><div class='t' style='right:481px;top:461.79px;font-size:9.7px;font-weight:400;color:#333;'>Invoice Amount</div><div class='t' style='left:972px;top:461.79px;font-size:9.7px;font-weight:400;color:#333;'>Status</div><div class='t' style='left:1047px;top:461.79px;font-size:9.7px;font-weight:400;color:#333;'>Description</div><div class='t' style='left:228px;top:489.29px;font-size:9.7px;font-weight:400;color:#333;'>C1084</div><div class='t' style='left:303px;top:489.29px;font-size:9.7px;font-weight:400;color:#333;letter-spacing:-0.5px'>29 - WACY-TV</div><div class='t' style='left:416px;top:489.29px;font-size:9.7px;font-weight:400;color:#333;'>07/31/2022</div><div class='t' style='left:491px;top:489.29px;font-size:9.7px;font-weight:400;color:#333;'>915</div><div class='t' style='left:555px;top:489.29px;font-size:9.7px;font-weight:400;color:#333;letter-spacing:-0.4px'>348 - TV</div><div class='t' style='left:680.0px;width:60px;text-align:center;top:489.29px;font-size:9.7px;font-weight:400;color:#333;'>USD</div><div class='t' style='right:631px;top:489.29px;font-size:9.7px;font-weight:400;color:#333;letter-spacing:-0.1px;margin-right:-0.1px'>17,000.00</div><div class='t' style='left:815.0px;width:60px;text-align:center;top:489.29px;font-size:9.7px;font-weight:400;color:#333;'>USD</div><div class='t' style='right:481px;top:489.29px;font-size:9.7px;font-weight:400;color:#333;letter-spacing:-0.1px;margin-right:-0.1px'>4,250.00</div><div class='t' style='left:972px;top:489.29px;font-size:9.7px;font-weight:400;color:#333;'>Posted</div><div class='t' style='left:228px;top:514.29px;font-size:9.7px;font-weight:400;color:#333;'>C1084</div><div class='t' style='left:303px;top:514.29px;font-size:9.7px;font-weight:400;color:#333;letter-spacing:-0.5px'>29 - WACY-TV</div><div class='t' style='left:416px;top:514.29px;font-size:9.7px;font-weight:400;color:#333;'>07/31/2022</div><div class='t' style='left:491px;top:514.29px;font-size:9.7px;font-weight:400;color:#333;'>915</div><div class='t' style='left:555px;top:514.29px;font-size:9.7px;font-weight:400;color:#333;letter-spacing:-0.4px'>348 - TV</div><div class='t' style='left:680.0px;width:60px;text-align:center;top:514.29px;font-size:9.7px;font-weight:400;color:#333;'>USD</div><div class='t' style='right:631px;top:514.29px;font-size:9.7px;font-weight:400;color:#333;letter-spacing:-0.1px;margin-right:-0.1px'>17,000.00</div><div class='t' style='left:815.0px;width:60px;text-align:center;top:514.29px;font-size:9.7px;font-weight:400;color:#333;'>USD</div><div class='t' style='right:481px;top:514.29px;font-size:9.7px;font-weight:400;color:#333;letter-spacing:-0.1px;margin-right:-0.1px'>4,250.00</div><div class='t' style='left:972px;top:514.29px;font-size:9.7px;font-weight:400;color:#333;'>Posted</div><div class='t' style='left:228px;top:540.29px;font-size:9.7px;font-weight:400;color:#333;'>C1084</div><div class='t' style='left:303px;top:540.29px;font-size:9.7px;font-weight:400;color:#333;letter-spacing:-0.5px'>29 - WACY-TV</div><div class='t' style='left:416px;top:540.29px;font-size:9.7px;font-weight:400;color:#333;'>07/31/2022</div><div class='t' style='left:491px;top:540.29px;font-size:9.7px;font-weight:400;color:#333;'>915</div><div class='t' style='left:555px;top:540.29px;font-size:9.7px;font-weight:400;color:#333;letter-spacing:-0.4px'>348 - TV</div><div class='t' style='left:680.0px;width:60px;text-align:center;top:540.29px;font-size:9.7px;font-weight:400;color:#333;'>USD</div><div class='t' style='right:631px;top:540.29px;font-size:9.7px;font-weight:400;color:#333;letter-spacing:-0.1px;margin-right:-0.1px'>17,000.00</div><div class='t' style='left:815.0px;width:60px;text-align:center;top:540.29px;font-size:9.7px;font-weight:400;color:#333;'>USD</div><div class='t' style='right:481px;top:540.29px;font-size:9.7px;font-weight:400;color:#333;letter-spacing:-0.1px;margin-right:-0.1px'>4,250.00</div><div class='t' style='left:972px;top:540.29px;font-size:9.7px;font-weight:400;color:#333;'>Posted</div><div class='t' style='left:228px;top:565.29px;font-size:9.7px;font-weight:400;color:#333;'>C1084</div><div class='t' style='left:303px;top:565.29px;font-size:9.7px;font-weight:400;color:#333;letter-spacing:-0.5px'>29 - WACY-TV</div><div class='t' style='left:416px;top:565.29px;font-size:9.7px;font-weight:400;color:#333;'>07/31/2022</div><div class='t' style='left:491px;top:565.29px;font-size:9.7px;font-weight:400;color:#333;'>915</div><div class='t' style='left:555px;top:565.29px;font-size:9.7px;font-weight:400;color:#333;letter-spacing:-0.4px'>348 - TV</div><div class='t' style='left:680.0px;width:60px;text-align:center;top:565.29px;font-size:9.7px;font-weight:400;color:#333;'>USD</div><div class='t' style='right:631px;top:565.29px;font-size:9.7px;font-weight:400;color:#333;letter-spacing:-0.1px;margin-right:-0.1px'>17,000.00</div><div class='t' style='left:815.0px;width:60px;text-align:center;top:565.29px;font-size:9.7px;font-weight:400;color:#333;'>USD</div><div class='t' style='right:481px;top:565.29px;font-size:9.7px;font-weight:400;color:#333;letter-spacing:-0.1px;margin-right:-0.1px'>4,250.00</div><div class='t' style='left:972px;top:565.29px;font-size:9.7px;font-weight:400;color:#333;'>Posted</div><div class='a' style='left:0px;top:669px;width:1440px;height:1px;background:#1a1a1a;'></div></div></body></html>
